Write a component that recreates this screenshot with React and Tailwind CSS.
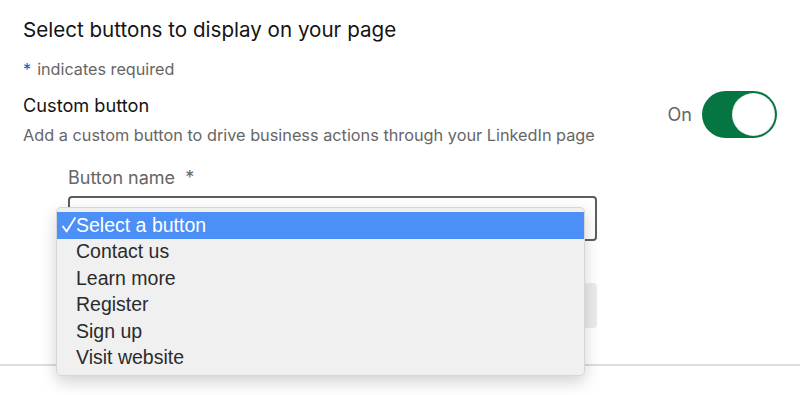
import React from 'react';

const options = ['Select a button', 'Contact us', 'Learn more', 'Register', 'Sign up', 'Visit website'];

const Toggle = ({ on }) => (
  <div className="flex items-center gap-[10px] -mt-[2px]">
    <span className="text-[18px] leading-[24px] text-[#666666]">{on ? 'On' : 'Off'}</span>
    <div className="w-[75px] h-[47px] rounded-full bg-[#057642] flex items-center justify-end pr-[2px]">
      <div className="w-[43px] h-[43px] rounded-full bg-white shadow-[inset_0_0_0_1px_rgba(0,0,0,0.08)]"></div>
    </div>
  </div>
);

const Check = () => (
  <svg width="14" height="16" viewBox="0 0 14 16" fill="none">
    <path d="M1 9.5 L4.6 14.5 L13 1" stroke="white" strokeWidth="1.8" strokeLinecap="round" strokeLinejoin="round" />
  </svg>
);

const App = () => {
  return (
    <div className="relative w-[800px] h-[395px] overflow-hidden bg-white font-['Inter',sans-serif]">
      <div className="px-[23px] pt-[18px]">
        <h2 className="text-[20.6px] leading-[24px] text-[#141414]">Select buttons to display on your page</h2>

        <p className="mt-[17px] text-[16.2px] leading-[20px] text-[#666666]">
          <span className="text-[#0a66c2] mr-[6px]">*</span>indicates required
        </p>

        <div className="mt-[14px] flex justify-between items-start">
          <div>
            <h3 className="text-[18.2px] leading-[24px] text-[#141414]">Custom button</h3>
            <p className="mt-[8px] text-[16.3px] leading-[20px] text-[#666666]">
              Add a custom button to drive business actions through your LinkedIn page
            </p>
          </div>
          <Toggle on />
        </div>

        <div className="pl-[45px] pr-[180px] mt-[21px]">
          <label className="block text-[18px] leading-[24px] text-[#666666]">Button name&nbsp; *</label>
          <div className="mt-[6px] h-[45px] rounded-[4px] border-2 border-[#5e5e5e] bg-white"></div>
          <div className="mt-[42px] h-[45px] rounded-[4px] bg-[#ececec]"></div>
        </div>
      </div>

      <div className="mt-[36px] h-[2px] bg-[#dcdcdc]"></div>

      {/* native select popup */}
      <div className="absolute left-[56px] top-[207px] w-[529px] rounded-[5px] bg-[#f0f0f0] border border-[#d6d6d6] shadow-[0_6px_16px_rgba(0,0,0,0.18)] py-[4px] font-['Liberation_Sans',Arial,sans-serif]">
        {options.map((opt, i) => (
          <div
            key={opt}
            className={
              i === 0
                ? 'flex items-center h-[26.5px] pl-[5px] bg-[#4b8ff7] text-white text-[19.5px]'
                : 'flex items-center h-[26.5px] pl-[5px] text-[#2b2b2b] text-[19.5px]'
            }
          >
            <span className="w-[14px] shrink-0 flex items-center">{i === 0 && <Check />}</span>
            <span>{opt}</span>
          </div>
        ))}
      </div>
    </div>
  );
};

export default App;
